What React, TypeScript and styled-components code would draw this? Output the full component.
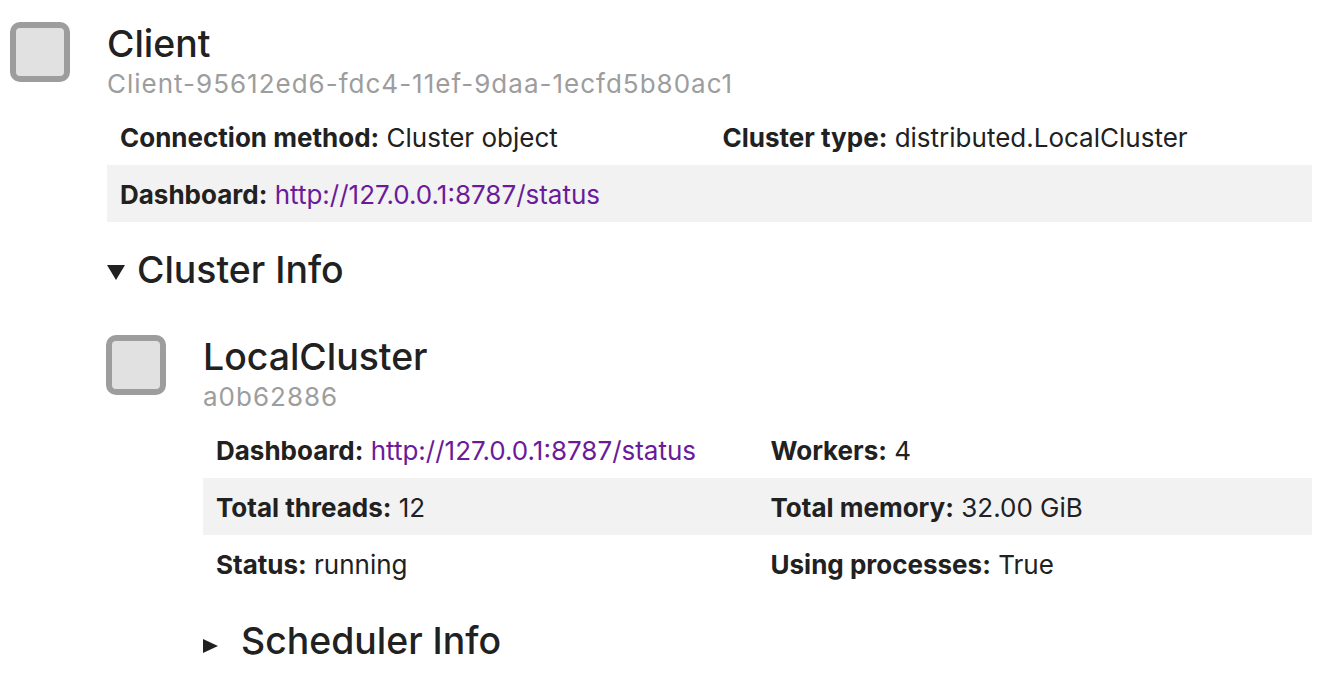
import React from "react";
import styled, { createGlobalStyle } from "styled-components";

const GlobalStyle = createGlobalStyle`
  html, body { margin: 0; padding: 0; background: #ffffff; }
  body {
    font-family: Inter, Roboto, "Noto Sans", "Liberation Sans", sans-serif;
    color: #212121;
    -webkit-font-smoothing: antialiased;
  }
`;

const Page = styled.div`
  padding: 22px 22px 0 10px;
`;

const Block = styled.div`
  display: flex;
  align-items: flex-start;
  gap: 37px;
`;

const Icon = styled.div<{ $indent?: number }>`
  flex: 0 0 auto;
  box-sizing: border-box;
  width: 60px;
  height: 60px;
  margin-left: ${(p) => p.$indent ?? 0}px;
  background: #e1e1e1;
  border: 6px solid #9d9d9d;
  border-radius: 10px;
`;

const Body = styled.div<{ $indent?: number }>`
  flex: 1 1 auto;
  min-width: 0;
  margin-left: ${(p) => p.$indent ?? 0}px;
`;

const Title = styled.h3`
  margin: 0;
  font-size: 37.4px;
  line-height: 44px;
  font-weight: 500;
  color: #212121;
`;

const Sub = styled.p`
  margin: 0;
  font-size: 26px;
  line-height: 36px;
  letter-spacing: 1px;
  color: #9d9d9d;
`;

const Table = styled.table`
  width: 100%;
  margin-top: 6px;
  border-collapse: collapse;
  table-layout: fixed;
  text-align: left;
`;

const Row = styled.tr<{ $striped?: boolean }>`
  background: ${(p) => (p.$striped ? "#f2f2f2" : "transparent")};
`;

const Cell = styled.td`
  padding: 11px 13px 9px;
  font-size: 26px;
  line-height: 37px;
  color: #212121;
  white-space: nowrap;
`;

const Label = styled.strong`
  font-weight: 700;
`;

const Link = styled.a`
  color: #6a1b9a;
  text-decoration: none;
`;

const Summary = styled.div<{ $top: number }>`
  display: flex;
  align-items: flex-start;
  margin-top: ${(p) => p.$top}px;
`;

const Marker = styled.span<{ $open?: boolean }>`
  flex: 0 0 auto;
  width: 0;
  height: 0;
  ${(p) =>
    p.$open
      ? `
    margin: 17px 12px 0 0;
    border-left: 9.5px solid transparent;
    border-right: 9.5px solid transparent;
    border-top: 15px solid #212121;
  `
      : `
    margin: 20px 23px 0 0;
    border-top: 7.5px solid transparent;
    border-bottom: 7.5px solid transparent;
    border-left: 15px solid #212121;
  `}
`;

const Nested = styled.div`
  margin-top: 43px;
`;

type Item = { label: string; value: string; link?: boolean };

const InfoTable: React.FC<{ rows: Item[][] }> = ({ rows }) => (
  <Table>
    <tbody>
      {rows.map((r, i) => (
        <Row key={i} $striped={i % 2 === 1}>
          {r.map((c, j) => (
            <Cell key={j}>
              <Label>{c.label}</Label> {c.link ? <Link href="#">{c.value}</Link> : c.value}
            </Cell>
          ))}
          {r.length === 1 && <Cell />}
        </Row>
      ))}
    </tbody>
  </Table>
);

export default function App() {
  return (
    <Page>
      <GlobalStyle />
      <Block>
        <Icon />
        <Body>
          <Title>Client</Title>
          <Sub>Client-95612ed6-fdc4-11ef-9daa-1ecfd5b80ac1</Sub>
          <InfoTable
            rows={[
              [
                { label: "Connection method:", value: "Cluster object" },
                { label: "Cluster type:", value: "distributed.LocalCluster" },
              ],
              [{ label: "Dashboard:", value: "http://127.0.0.1:8787/status", link: true }],
            ]}
          />
        </Body>
      </Block>
      <Body $indent={97}>
        <Summary $top={26}>
          <Marker $open />
          <Title>Cluster Info</Title>
        </Summary>
      </Body>
      <Nested>
        <Block>
          <Icon $indent={96} />
          <Body>
            <Title>LocalCluster</Title>
            <Sub>a0b62886</Sub>
            <InfoTable
              rows={[
                [
                  { label: "Dashboard:", value: "http://127.0.0.1:8787/status", link: true },
                  { label: "Workers:", value: "4" },
                ],
                [
                  { label: "Total threads:", value: "12" },
                  { label: "Total memory:", value: "32.00 GiB" },
                ],
                [
                  { label: "Status:", value: "running" },
                  { label: "Using processes:", value: "True" },
                ],
              ]}
            />
            <Summary $top={27}>
              <Marker />
              <Title>Scheduler Info</Title>
            </Summary>
          </Body>
        </Block>
      </Nested>
    </Page>
  );
}
